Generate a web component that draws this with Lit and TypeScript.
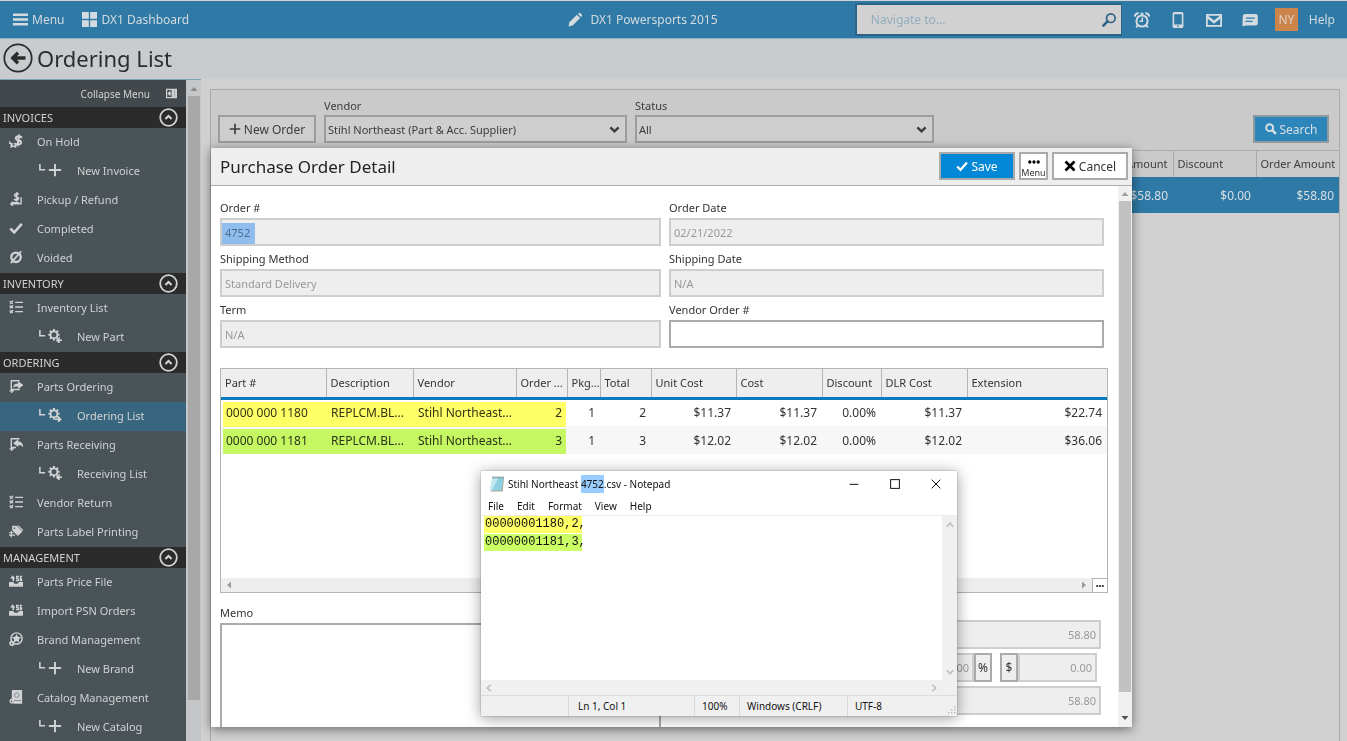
import { LitElement, html, css, svg, nothing } from "lit";
import { customElement, property } from "lit/decorators.js";
import { classMap } from "lit/directives/class-map.js";

const reset = css`
  *,
  *::before,
  *::after {
    box-sizing: border-box;
  }
  button,
  input,
  select,
  textarea {
    font: inherit;
    color: inherit;
    margin: 0;
    border-radius: 0;
  }
  a {
    color: inherit;
    text-decoration: none;
  }
`;

/* ---------- icons, all on a 16 x 16 grid ---------- */
const icons = {
  bars: svg`<path d="M0 3h16M0 8h16M0 13h16" stroke="currentColor" stroke-width="2.6"/>`,
  tiles: svg`<path d="M0 0h7.3v7.3H0zM8.7 0H16v7.3H8.7zM0 8.7h7.3V16H0zM8.7 8.7H16V16H8.7z" fill="currentColor"/>`,
  pencil: svg`<path d="M1.500 14.500l.8-4.200L10 2.800l3.200 3.200L5.600 13.600zM11 1.900l.7-.7q.9-.7 1.800 0l1.300 1.300q.7.9 0 1.800l-.7.7z" fill="currentColor"/>`,
  find: svg`<circle cx="9.800" cy="6.200" r="4.300" fill="none" stroke="currentColor" stroke-width="1.700"/><path d="M6.500 9.400 2.400 13.600" stroke="currentColor" stroke-width="2.600" stroke-linecap="round"/>`,
  alarm: svg`<circle cx="8" cy="9" r="5.6" fill="none" stroke="currentColor" stroke-width="2"/><path d="M8.3 5.5V9.3H5.6" fill="none" stroke="currentColor" stroke-width="1.5"/><path d="M.6 4.6Q1 1.5 4.6 1M15.4 4.6Q15 1.5 11.4 1M6.6 1.7h2.8M3.6 13.4 2.2 15.4M12.4 13.4l1.4 2" fill="none" stroke="currentColor" stroke-width="1.900"/>`,
  phone: svg`<path fill-rule="evenodd" d="M4.2 0h7.6q1.6 0 1.6 1.6v12.8q0 1.6-1.6 1.6H4.2q-1.6 0-1.6-1.6V1.6Q2.6 0 4.2 0zM4.2 2.2v10.2h7.6V2.2zM7.2 13.4v1.4h1.6v-1.4z" fill="currentColor"/>`,
  mail: svg`<rect x=".9" y="2.9" width="14.200" height="11" fill="none" stroke="currentColor" stroke-width="1.800"/><path d="M1 4.400 8 10l7-5.600" fill="none" stroke="currentColor" stroke-width="2.600"/>`,
  chat: svg`<path fill-rule="evenodd" d="M3 2h10.600q2.200 0 2.200 2v7.600q0 2-2.200 2H4l-3.600.6L.8 4q.2-2 2.200-2zM4 5.400v1.300h8.800V5.400zM3.400 8.800v1.300h7.200V8.800z" fill="currentColor"/>`,
  back: svg`<circle cx="8" cy="8" r="7.3" fill="none" stroke="currentColor" stroke-width=".95"/><path d="M12 8H5M8 5.200 5.200 8 8 10.800" fill="none" stroke="currentColor" stroke-width="1.800"/>`,
  up: svg`<circle cx="8" cy="8" r="7" fill="none" stroke="currentColor" stroke-width="1.500"/><path d="M5.400 9.2 8 6.800l2.600 2.400" fill="none" stroke="currentColor" stroke-width="1.800"/>`,
  collapse: svg`<path fill-rule="evenodd" d="M0 1h16v14H0zM1.800 2.800v10.400h6.400V2.800z" fill="currentColor"/><path d="M7.800 8H4M5.800 5.400 3.200 8l2.600 2.600z" stroke="currentColor" stroke-width="1.600" fill="currentColor"/><path d="M12.500 3v10" stroke="#8d9295" stroke-width="1"/>`,
  hold: svg`<path d="M15 4.200Q12.800 2.600 10.600 2.700 7.600 3 7.800 5 8 6.700 10.800 7.300q3.200.6 3 2.600-.4 2.200-3.600 2.100Q7.600 11.800 6 10.600M11.800.6 9.600 14" fill="none" stroke="currentColor" stroke-width="2.400"/><path d="M.6 8.400v2l4 1.400M1.600 14h6.800M2.600 12v3.600M7.400 12.400v3.200" stroke="currentColor" stroke-width="1.800" fill="none"/>`,
  refund: svg`<path d="M11.200 2.600Q9.800 1.800 8.400 2 6.400 2.300 6.600 3.900 6.900 5.300 8.800 5.700q2.300.5 2 2.100-.4 1.700-2.600 1.500-1.600-.2-2.700-1.100M9.200.2 8.300 11" fill="none" stroke="currentColor" stroke-width="1.900"/><path d="M13.800 6v7.600H2M4.600 11 2 13.600 4.600 16M3.600 12.200h8" fill="none" stroke="currentColor" stroke-width="1.600"/>`,
  check: svg`<path d="M1.500 8.600 6 13 14.600 3.200" fill="none" stroke="currentColor" stroke-width="3"/>`,
  empty: svg`<circle cx="8" cy="8.300" r="5.400" fill="none" stroke="currentColor" stroke-width="2.600"/><path d="M2 15 14 1.400" stroke="currentColor" stroke-width="2"/>`,
  list: svg`<path d="M7 2.800h9M7 8h9M7 13.200h9" stroke="currentColor" stroke-width="1.500"/><path d="M.6 1.400 4.600 4M4.600.8 1.400 4.600M.6 6.600l4 2.400M4.600 6 1.400 9.800M.6 12l4 2.400M4.600 11.400 1.400 15.200" stroke="currentColor" stroke-width="1.600"/>`,
  gearIn: svg`<circle cx="6.800" cy="6.600" r="3.900" fill="none" stroke="currentColor" stroke-width="2"/><path d="M6.800 0v2.200M6.800 11v2M.4 6.600h2M11 6.600h2.200M2.200 2l1.600 1.600M9.800 9.600l1 1M2.200 11.200l1.600-1.600M11.400 2 9.800 3.600" stroke="currentColor" stroke-width="2.400"/><path d="M16 12.800h-4.600M12.600 10.400 10 12.800l2.600 2.800z" stroke="currentColor" stroke-width="1.600" fill="currentColor"/>`,
  gearOut: svg`<circle cx="6.800" cy="6.600" r="3.900" fill="none" stroke="currentColor" stroke-width="2"/><path d="M6.800 0v2.200M6.800 11v2M.4 6.600h2M11 6.600h2.200M2.200 2l1.600 1.600M9.800 9.600l1 1M2.200 11.200l1.600-1.600M11.400 2 9.800 3.600" stroke="currentColor" stroke-width="2.400"/><path d="M7.600 12.800h4.600M12 10.400l2.600 2.400-2.600 2.800z" stroke="currentColor" stroke-width="1.600" fill="currentColor"/>`,
  send: svg`<path d="M12 2H2.600v10h9.800M.6 13.600h5" fill="none" stroke="currentColor" stroke-width="1.600"/><path d="M4.600 10Q5 5 10.400 5V2.600L16.400 7l-6 4.400V8.800Q6.600 8.200 4.600 10z" fill="currentColor"/><path d="M3 12v4" stroke="currentColor" stroke-width="1.600"/>`,
  receive: svg`<path d="M12 2H2.600v10h5.400M.6 13.600h5" fill="none" stroke="currentColor" stroke-width="1.600"/><path d="M16.400 13Q15.600 9 10.600 9v2.400L4.600 7l6-4.400V5.200Q16.400 5.600 16.400 13z" fill="currentColor"/><path d="M3 12v4" stroke="currentColor" stroke-width="1.600"/>`,
  tag: svg`<path fill-rule="evenodd" d="M3.600 2h5l6.800 6.600-5.200 5.200L3.600 7zM5.400 4v1.600h1.600V4z" fill="currentColor"/><path d="M10 1.800 16 7.600M0 10h5M0 12.600h7M2.600 8v7" stroke="currentColor" stroke-width="1.400"/>`,
  inbox: svg`<path d="M0 9h4.800l1.400 2.200h3.800L11.400 9H16v5.600H0z" fill="currentColor"/><path d="M4 8.400V5H1.200L4.200 1.400 7.200 5H5.800v3.400zM8 2h3.400v1.600H9.800v1.200h1.800v3.400H8V6.800h1.800V6H8zM12.400 2H15v1.600h-1.200v1.200H15v3.400h-2.600z" fill="currentColor"/>`,
  star: svg`<circle cx="8.600" cy="7.400" r="6.400" fill="none" stroke="currentColor" stroke-width="1.700"/><path d="m8.600 2.200 1.600 3.300 3.700.5-2.700 2.500.7 3.700-3.300-1.900-3.300 1.900.7-3.700L3.300 6l3.700-.5z" fill="currentColor"/><circle cx="3.200" cy="13" r="2" fill="none" stroke="currentColor" stroke-width="1.900"/>`,
  book: svg`<path d="M3.400 0H15v15.600H5.400L3 12.400z" fill="currentColor"/><circle cx="9" cy="5.800" r="2.600" fill="none" stroke="#7b8387" stroke-width="1"/><path d="M5 12h9" stroke="#7b8387"/><circle cx="3.200" cy="12.800" r="2" fill="none" stroke="currentColor" stroke-width="1.600"/>`,
  plus: svg`<path d="M8 1v14M1 8h14" stroke="currentColor" stroke-width="2.200"/>`,
  branch: svg`<path d="M2 0v13h12" fill="none" stroke="currentColor" stroke-width="3.600"/>`,
  zoom: svg`<circle cx="6.200" cy="6.200" r="4.600" fill="none" stroke="currentColor" stroke-width="2.600"/><path d="m9.800 9.800 4.800 4.800" stroke="currentColor" stroke-width="3.200"/>`,
  cross: svg`<path d="m2 2 12 12M14 2 2 14" stroke="currentColor" stroke-width="3.600"/>`,
  dots: svg`<circle cx="2.400" cy="8" r="2.200" fill="currentColor"/><circle cx="8" cy="8" r="2.200" fill="currentColor"/><circle cx="13.600" cy="8" r="2.200" fill="currentColor"/>`,
  chevron: svg`<path d="m2 5 6 5.600L14 5" fill="none" stroke="currentColor" stroke-width="3.600"/>`,
  triUp: svg`<path d="M1 12 8 4l7 8z" fill="currentColor"/>`,
  triDown: svg`<path d="M1 4l7 8 7-8z" fill="currentColor"/>`,
  triLeft: svg`<path d="M12 1 4 8l8 7z" fill="currentColor"/>`,
  triRight: svg`<path d="M4 1l8 7-8 7z" fill="currentColor"/>`,
  thinUp: svg`<path d="m1.500 11.500 6.500-7 6.500 7" fill="none" stroke="currentColor" stroke-width="3.200"/>`,
  thinDown: svg`<path d="m1.500 4.500 6.500 7 6.500-7" fill="none" stroke="currentColor" stroke-width="3.200"/>`,
  thinLeft: svg`<path d="m11.500 1.500-7 6.500 7 6.500" fill="none" stroke="currentColor" stroke-width="3.200"/>`,
  thinRight: svg`<path d="m4.500 1.500 7 6.500-7 6.500" fill="none" stroke="currentColor" stroke-width="3.200"/>`,
  minimize: svg`<path d="M1 8.500h14" stroke="currentColor" stroke-width="1.600"/>`,
  maximize: svg`<rect x="1" y="1" width="14" height="14" fill="none" stroke="currentColor" stroke-width="1.600"/>`,
  close: svg`<path d="m1 1 14 14M15 1 1 15" stroke="currentColor" stroke-width="1.600"/>`,
  grip: svg`<path d="M12 0h3v3h-3zM12 6h3v3h-3zM12 12h3v3h-3zM6 6h3v3H6zM6 12h3v3H6zM0 12h3v3H0z" fill="currentColor"/>`,
  notepad: svg`<path d="M4 2h11l-1.400 13.500H2z" fill="#a9a58e"/><path d="M3.400 1.500h11.200L12.600 14.500H1z" fill="#8fd0e0"/><path d="M3.400 1.500h6L3 14.500H1z" fill="#c2e9f1"/><path d="M3.400 1.500h11.200" stroke="#6f858c" stroke-width="1.800" stroke-dasharray="1.200 .8"/>`,
};
type IconName = keyof typeof icons;

@customElement("ui-icon")
export class UiIcon extends LitElement {
  @property() name: IconName = "plus";
  static styles = css`
    :host {
      display: inline-block;
      flex: none;
      width: 16px;
      height: 16px;
    }
    svg {
      display: block;
      width: 100%;
      height: 100%;
    }
  `;
  render() {
    return html`<svg viewBox="0 0 16 16" aria-hidden="true">${icons[this.name]}</svg>`;
  }
}

/* ---------- top bar ---------- */
@customElement("top-bar")
export class TopBar extends LitElement {
  static styles = [
    reset,
    css`
      :host {
        display: block;
        color: #d4dbe0;
        font-size: 12px;
      }
      .bar {
        display: grid;
        grid-template-columns: 9fr auto 10fr;
        align-items: center;
        height: 38px;
        border-top: 1px solid #d3d3d3;
        background: #2e79a5;
      }
      .group {
        display: flex;
        align-items: center;
      }
      .left {
        padding-left: 13px;
        gap: 18px;
      }
      .link {
        display: flex;
        align-items: center;
        gap: 4px;
      }
      .link ui-icon {
        width: 15px;
        height: 15px;
      }
      .center {
        gap: 8px;
      }
      .right {
        justify-self: end;
        padding-right: 12px;
        gap: 20px;
      }
      .search {
        display: flex;
        align-items: center;
        width: 267px;
        height: 33px;
        margin-right: -8px;
        padding: 0 4px 0 14px;
        border: 2px solid #2b6487;
        border-right-width: 1px;
        background: #d1d1d1;
      }
      .search input {
        flex: 1;
        min-width: 0;
        padding: 0;
        border: 0;
        outline: 0;
        background: none;
      }
      .search input::placeholder {
        color: #93adbe;
        opacity: 1;
      }
      .search ui-icon {
        color: #2b6487;
      }
      .icon {
        display: flex;
        padding: 0;
        border: 0;
        background: none;
      }
      .badge {
        width: 23px;
        height: 23px;
        margin: 0 -9px 0 -3px;
        padding: 0;
        border: 0;
        background: #cd844b;
        color: #dcd3cb;
      }
      .title {
        display: flex;
        align-items: center;
        gap: 4px;
        height: 42px;
        margin-bottom: -1px;
        padding: 0 0 2px 3px;
        border-top: 1px solid #8fb0c2;
        border-bottom: 1px solid #7ea4b8;
        background: #c8cccf;
        color: #2c2c2c;
      }
      .title h1 {
        margin: 0;
        font-size: 22px;
        font-weight: 400;
      }
      .back {
        display: flex;
        padding: 0;
        border: 0;
        background: none;
      }
      .back ui-icon {
        width: 30px;
        height: 30px;
      }
    `,
  ];
  render() {
    return html`
      <nav class="bar">
        <div class="group left">
          <a class="link" href="#menu"><ui-icon name="bars"></ui-icon>Menu</a>
          <a class="link" href="#dashboard"><ui-icon name="tiles"></ui-icon>DX1 Dashboard</a>
        </div>
        <div class="group center">
          <ui-icon name="pencil"></ui-icon><span>DX1 Powersports 2015</span>
        </div>
        <div class="group right">
          <div class="search">
            <input type="text" aria-label="Navigate to" placeholder="Navigate to..." />
            <ui-icon name="find"></ui-icon>
          </div>
          ${(["alarm", "phone", "mail", "chat"] as IconName[]).map(
            (n) => html`<button class="icon" aria-label=${n}><ui-icon name=${n}></ui-icon></button>`
          )}
          <button class="badge">NY</button>
          <a href="#help">Help</a>
        </div>
      </nav>
      <header class="title">
        <button class="back" aria-label="Back"><ui-icon name="back"></ui-icon></button>
        <h1>Ordering List</h1>
      </header>
    `;
  }
}

/* ---------- side menu ---------- */
interface Item {
  label: string;
  icon: IconName;
  sub?: boolean;
  active?: boolean;
}
const sections: { title: string; items: Item[] }[] = [
  {
    title: "INVOICES",
    items: [
      { label: "On Hold", icon: "hold" },
      { label: "New Invoice", icon: "plus", sub: true },
      { label: "Pickup / Refund", icon: "refund" },
      { label: "Completed", icon: "check" },
      { label: "Voided", icon: "empty" },
    ],
  },
  {
    title: "INVENTORY",
    items: [
      { label: "Inventory List", icon: "list" },
      { label: "New Part", icon: "gearIn", sub: true },
    ],
  },
  {
    title: "ORDERING",
    items: [
      { label: "Parts Ordering", icon: "send" },
      { label: "Ordering List", icon: "gearOut", sub: true, active: true },
      { label: "Parts Receiving", icon: "receive" },
      { label: "Receiving List", icon: "gearIn", sub: true },
      { label: "Vendor Return", icon: "list" },
      { label: "Parts Label Printing", icon: "tag" },
    ],
  },
  {
    title: "MANAGEMENT",
    items: [
      { label: "Parts Price File", icon: "inbox" },
      { label: "Import PSN Orders", icon: "inbox" },
      { label: "Brand Management", icon: "star" },
      { label: "New Brand", icon: "plus", sub: true },
      { label: "Catalog Management", icon: "book" },
      { label: "New Catalog", icon: "plus", sub: true },
    ],
  },
];

@customElement("side-menu")
export class SideMenu extends LitElement {
  static styles = [
    reset,
    css`
      :host {
        display: flex;
        overflow: hidden;
        padding-top: 1px;
        font-size: 11px;
        color: #d0d2d3;
      }
      .menu {
        width: 186px;
        background: #4a5357;
        overflow: hidden;
      }
      .collapse {
        display: flex;
        justify-content: flex-end;
        align-items: center;
        gap: 16px;
        width: 100%;
        height: 27px;
        padding: 0 9px 0 0;
        border: 0;
        background: #42484b;
        font-size: 10px;
      }
      .collapse ui-icon {
        width: 11px;
        height: 11px;
      }
      .section {
        display: flex;
        align-items: center;
        justify-content: space-between;
        width: 100%;
        height: 21px;
        padding: 0 8px 0 3px;
        border: 0;
        background: #2b2b2b;
      }
      .section ui-icon {
        width: 19px;
        height: 19px;
      }
      ul {
        margin: 0;
        padding: 0;
        list-style: none;
      }
      .item {
        display: grid;
        grid-template-columns: 28px 1fr;
        align-items: center;
        height: 29px;
        padding: 0 0 3px 9px;
      }
      .item > ui-icon {
        width: 14px;
        height: 14px;
      }
      .item.sub {
        grid-template-columns: 9px 29px 1fr;
        padding-left: 39px;
      }
      .item.sub > ui-icon:first-child {
        width: 7px;
        height: 7px;
        margin-bottom: 5px;
      }
      .item.active {
        background: #38667f;
      }
      .scroll {
        width: 15px;
        padding: 5px 1px 0 2px;
        background: #c5c6c7;
        color: #8a8a8a;
      }
      .scroll ui-icon {
        display: block;
        width: 8px;
        height: 8px;
        margin: 0 2px 3px;
      }
      .thumb {
        height: 92%;
        background: #a8a8a8;
      }
    `,
  ];
  render() {
    return html`
      <nav class="menu">
        <button class="collapse">Collapse Menu<ui-icon name="collapse"></ui-icon></button>
        ${sections.map(
          (s) => html`
            <button class="section">${s.title}<ui-icon name="up"></ui-icon></button>
            <ul>
              ${s.items.map(
                (i) => html`<li>
                  <a class=${classMap({ item: true, sub: !!i.sub, active: !!i.active })} href="#item">
                    ${i.sub ? html`<ui-icon name="branch"></ui-icon>` : nothing}
                    <ui-icon name=${i.icon}></ui-icon><span>${i.label}</span>
                  </a>
                </li>`
              )}
            </ul>
          `
        )}
      </nav>
      <div class="scroll"><ui-icon name="triUp"></ui-icon><div class="thumb"></div></div>
    `;
  }
}

/* ---------- order list behind the dialog ---------- */
@customElement("order-list")
export class OrderList extends LitElement {
  static styles = [
    reset,
    css`
      :host {
        display: block;
        padding: 10px 7px 0 9px;
        background: #d0d0d0;
        font-size: 11px;
        color: #3c3c3c;
      }
      .panel {
        height: 100%;
        border: 1px solid #aaaaaa;
        border-bottom: 0;
        background: #d0d0d0;
      }
      .filters {
        display: grid;
        grid-template-columns: 98px 303px 299px 1fr;
        gap: 8px;
        align-items: end;
        padding: 8px 10px 7px 7px;
        background: #cacaca;
      }
      .filters label {
        display: block;
        line-height: 15px;
        margin-bottom: 2px;
      }
      .btn {
        display: flex;
        align-items: center;
        justify-content: center;
        gap: 3px;
        height: 28px;
        padding: 0;
        border: 2px solid #9c9c9c;
        background: #cecece;
        font-size: 12px;
      }
      .btn ui-icon {
        width: 12px;
        height: 12px;
      }
      .primary {
        justify-self: end;
        width: 76px;
        background: #2c86ba;
        border-color: #8f9aa0;
        color: #d8dfe3;
        font-size: 12px;
      }
      .select {
        position: relative;
      }
      select {
        display: block;
        width: 100%;
        height: 28px;
        padding: 0 2px;
        appearance: none;
        border: 2px solid #9c9c9c;
        background: #cecece;
      }
      .select ui-icon {
        position: absolute;
        right: 7px;
        top: 9px;
        width: 11px;
        height: 11px;
        pointer-events: none;
      }
      table {
        width: 100%;
        border-collapse: collapse;
        table-layout: fixed;
        border-top: 1px solid #aaaaaa;
      }
      th {
        height: 26px;
        padding: 0 4px;
        border-left: 1px solid #aaaaaa;
        background: #cacaca;
        font-weight: 400;
        text-align: left;
        white-space: nowrap;
      }
      th.end {
        border-left: 0;
        text-align: right;
        padding-right: 5px;
      }
      th:first-child {
        border-left: 0;
      }
      td {
        height: 36px;
        padding: 2px 5px 0 4px;
        background: #2e79a5;
        color: #d8dfe3;
        font-size: 12px;
        text-align: right;
      }
      .money {
        width: 83px;
      }
    `,
  ];
  render() {
    return html`
      <section class="panel">
        <div class="filters">
          <button class="btn"><ui-icon name="plus"></ui-icon>New Order</button>
          <div>
            <label for="vendor">Vendor</label>
            <div class="select">
              <select id="vendor"><option>Stihl Northeast (Part &amp; Acc. Supplier)</option></select>
              <ui-icon name="chevron"></ui-icon>
            </div>
          </div>
          <div>
            <label for="status">Status</label>
            <div class="select">
              <select id="status"><option>All</option></select>
              <ui-icon name="chevron"></ui-icon>
            </div>
          </div>
          <button class="btn primary"><ui-icon name="zoom"></ui-icon>Search</button>
        </div>
        <table>
          <colgroup><col /><col class="money" /><col class="money" /><col class="money" /></colgroup>
          <thead>
            <tr><th></th><th class="end">Amount</th><th>Discount</th><th>Order Amount</th></tr>
          </thead>
          <tbody>
            <tr><td></td><td>$58.80</td><td>$0.00</td><td>$58.80</td></tr>
          </tbody>
        </table>
      </section>
    `;
  }
}

/* ---------- purchase order dialog ---------- */
const fields = [
  { id: "order", label: "Order #", value: "4752", picked: true },
  { id: "date", label: "Order Date", value: "02/21/2022" },
  { id: "method", label: "Shipping Method", value: "Standard Delivery" },
  { id: "shipdate", label: "Shipping Date", value: "N/A" },
  { id: "term", label: "Term", value: "N/A" },
  { id: "vendororder", label: "Vendor Order #", value: "", editable: true },
];
const columns = [
  { label: "Part #", w: 105 },
  { label: "Description", w: 87 },
  { label: "Vendor", w: 103 },
  { label: "Order ...", w: 51, num: true },
  { label: "Pkg...", w: 33, num: true },
  { label: "Total", w: 51, num: true },
  { label: "Unit Cost", w: 85, num: true },
  { label: "Cost", w: 86, num: true },
  { label: "Discount", w: 59, num: true },
  { label: "DLR Cost", w: 86, num: true },
  { label: "Extension", w: 140, num: true },
];
const rows = [
  ["0000 000 1180", "REPLCM.BL...", "Stihl Northeast...", "2", "1", "2", "$11.37", "$11.37", "0.00%", "$11.37", "$22.74"],
  ["0000 000 1181", "REPLCM.BL...", "Stihl Northeast...", "3", "1", "3", "$12.02", "$12.02", "0.00%", "$12.02", "$36.06"],
];

@customElement("purchase-order")
export class PurchaseOrder extends LitElement {
  static styles = [
    reset,
    css`
      :host {
        display: flex;
        flex-direction: column;
        background: #fff;
        font-size: 11px;
        color: #333;
        box-shadow: 0 2px 10px rgba(0, 0, 0, 0.5);
        overflow: hidden;
      }
      header {
        display: flex;
        align-items: center;
        gap: 4px;
        height: 38px;
        padding: 0 4px 1px 9px;
        background: #eeeeee;
        border-bottom: 1px solid #adadad;
      }
      h2 {
        flex: 1;
        margin: 0;
        font-size: 17px;
        font-weight: 400;
        color: #222;
      }
      .btn {
        display: flex;
        align-items: center;
        justify-content: center;
        gap: 3px;
        width: 76px;
        height: 28px;
        padding: 0;
        border: 2px solid #aaaaaa;
        background: #fff;
        font-size: 12px;
      }
      .btn ui-icon {
        width: 12px;
        height: 12px;
        color: #000;
      }
      .save,
      .btn.save ui-icon {
        background: #0388d8;
        color: #fff;
      }
      .menu {
        flex-direction: column;
        gap: 0;
        width: 29px;
        font-size: 9px;
        line-height: 9px;
      }
      .btn.menu ui-icon {
        width: 16px;
        height: 12px;
      }
      .body {
        display: flex;
        flex: 1;
        min-height: 0;
      }
      .content {
        flex: 1;
        min-width: 0;
        padding: 15px 10px 0 9px;
        overflow: hidden;
      }
      .fields {
        display: grid;
        grid-template-columns: 441fr 435fr;
        gap: 6px 8px;
        margin-right: 4px;
      }
      .field label,
      .memo label {
        display: block;
        line-height: 14px;
        margin-bottom: 3px;
      }
      .box {
        position: relative;
      }
      input {
        display: block;
        width: 100%;
        height: 28px;
        padding: 0 3px;
        border: 2px solid #cecece;
        background: #eeeeee;
        color: #999;
      }
      input.editable {
        border-color: #aaaaaa;
        background: #fff;
      }
      .pick {
        position: absolute;
        left: 2px;
        top: 5px;
        width: 33px;
        height: 21px;
        background: #99ccff;
        mix-blend-mode: multiply;
      }
      input.picked {
        color: #7d8891;
      }
      .grid {
        position: relative;
        display: flex;
        flex-direction: column;
        height: 225px;
        margin-top: 20px;
        border: 1px solid #b4b4b4;
        overflow: hidden;
      }
      table {
        width: 100%;
        border-collapse: collapse;
        table-layout: fixed;
      }
      th {
        height: 29px;
        padding: 0 0 0 4px;
        border-right: 1px solid #b4b4b4;
        border-bottom: 3px solid #0a7ac0;
        background: #eeeeee;
        font-weight: 400;
        text-align: left;
        white-space: nowrap;
      }
      th:last-child {
        border-right: 0;
      }
      td {
        height: 28px;
        padding: 0 5px;
        font-size: 12px;
        white-space: nowrap;
      }
      td.num {
        text-align: right;
      }
      tr:nth-child(2) td {
        background: #f7f7f7;
      }
      .mark {
        position: absolute;
        left: 2px;
        width: 343px;
        height: 25px;
        top: 33px;
        background: #ffff66;
        mix-blend-mode: multiply;
      }
      .mark.green {
        top: 60px;
        background: #ccff66;
      }
      .hscroll {
        display: flex;
        align-items: center;
        justify-content: space-between;
        height: 14px;
        margin-top: auto;
        padding-left: 4px;
        background: #eeeeee;
        color: #9a9a9a;
      }
      .hscroll ui-icon {
        width: 8px;
        height: 8px;
      }
      .more {
        display: flex;
        align-items: center;
        justify-content: center;
        width: 15px;
        height: 14px;
        margin-left: 4px;
        padding: 0;
        border: 0;
        border-left: 1px solid #b4b4b4;
        border-top: 1px solid #b4b4b4;
        background: #fff;
        color: #222;
      }
      .end {
        display: flex;
        align-items: center;
        margin-left: auto;
      }
      .bottom {
        display: grid;
        grid-template-columns: 441fr 432fr;
        gap: 8px;
        margin: 13px 7px 0 0;
      }
      textarea {
        display: block;
        width: 100%;
        height: 110px;
        border: 2px solid #aaaaaa;
        resize: none;
      }
      .totals {
        display: grid;
        align-content: start;
        gap: 4px;
        padding-top: 14px;
      }
      .totals input {
        height: 29px;
        text-align: right;
      }
      .split {
        display: flex;
        gap: 8px;
        margin-right: 4px;
      }
      .split > div {
        display: flex;
      }
      .split > div:first-child {
        flex: 1;
      }
      .split > div:last-child {
        width: 97px;
      }
      .unit {
        flex: none;
        width: 18px;
        padding: 0;
        border: 2px solid #aaaaaa;
        background: #eeeeee;
        font-size: 12px;
      }
      .vscroll {
        display: flex;
        flex-direction: column;
        width: 14px;
        padding: 4px 1px 5px;
        background: #f0f0f0;
        color: #a0a0a0;
      }
      .vscroll ui-icon {
        width: 8px;
        height: 8px;
        margin: 0 2px 3px;
      }
      .thumb {
        height: 94%;
        margin-bottom: 22px;
        background: #c1c1c1;
      }
      .vscroll ui-icon:last-child {
        margin-bottom: 0;
        color: #505050;
      }
    `,
  ];
  render() {
    return html`
      <header>
        <h2>Purchase Order Detail</h2>
        <button class="btn save"><ui-icon name="check"></ui-icon>Save</button>
        <button class="btn menu"><ui-icon name="dots"></ui-icon>Menu</button>
        <button class="btn"><ui-icon name="cross"></ui-icon>Cancel</button>
      </header>
      <div class="body">
        <div class="content">
          <div class="fields">
            ${fields.map(
              (f) => html`<div class="field">
                <label for=${f.id}>${f.label}</label>
                <div class="box">
                  <input
                    id=${f.id}
                    type="text"
                    class=${classMap({ editable: !!f.editable, picked: !!f.picked })}
                    ?readonly=${!f.editable}
                    .value=${f.value}
                  />
                  ${f.picked ? html`<span class="pick"></span>` : nothing}
                </div>
              </div>`
            )}
          </div>
          <div class="grid">
            <table>
              <colgroup>
                ${columns.map((c) => html`<col width=${c.w} />`)}
              </colgroup>
              <thead>
                <tr>${columns.map((c) => html`<th>${c.label}</th>`)}</tr>
              </thead>
              <tbody>
                ${rows.map(
                  (r) => html`<tr>
                    ${r.map((v, i) => html`<td class=${classMap({ num: !!columns[i].num })}>${v}</td>`)}
                  </tr>`
                )}
              </tbody>
            </table>
            <span class="mark"></span><span class="mark green"></span>
            <div class="hscroll">
              <ui-icon name="triLeft"></ui-icon>
              <div class="end">
                <ui-icon name="triRight"></ui-icon>
                <button class="more" aria-label="More"><ui-icon name="dots"></ui-icon></button>
              </div>
            </div>
          </div>
          <div class="bottom">
            <div class="memo">
              <label for="memo">Memo</label>
              <textarea id="memo"></textarea>
            </div>
            <div class="totals">
              <input type="text" readonly aria-label="Subtotal" .value=${"58.80"} />
              <div class="split">
                <div>
                  <input type="text" readonly aria-label="Discount percent" .value=${"0.00"} />
                  <button class="unit">%</button>
                </div>
                <div>
                  <button class="unit">$</button>
                  <input type="text" readonly aria-label="Discount amount" .value=${"0.00"} />
                </div>
              </div>
              <input type="text" readonly aria-label="Total" .value=${"58.80"} />
            </div>
          </div>
        </div>
        <div class="vscroll">
          <ui-icon name="triUp"></ui-icon>
          <div class="thumb"></div>
          <ui-icon name="triDown"></ui-icon>
        </div>
      </div>
    `;
  }
}

/* ---------- notepad window ---------- */
@customElement("notepad-window")
export class NotepadWindow extends LitElement {
  static styles = [
    reset,
    css`
      :host {
        display: flex;
        flex-direction: column;
        background: #fff;
        font-size: 10px;
        color: #111;
        box-shadow: 0 2px 14px rgba(0, 0, 0, 0.4), 0 0 1px rgba(0, 0, 0, 0.5);
      }
      .title {
        display: flex;
        align-items: center;
        height: 26px;
        padding: 0 16px 0 8px;
      }
      .title > ui-icon {
        margin-right: 3px;
      }
      .name {
        flex: 1;
        white-space: pre;
      }
      .name mark {
        padding: 2px 0;
        background: #99ccff;
        color: inherit;
      }
      .win {
        display: flex;
        margin-left: 31px;
        padding: 0;
        border: 0;
        background: none;
      }
      .win ui-icon {
        width: 10px;
        height: 10px;
      }
      .menu {
        display: flex;
        gap: 13px;
        height: 19px;
        padding-left: 7px;
        line-height: 19px;
        border-bottom: 1px solid #eeeeee;
      }
      .menu button {
        padding: 0;
        border: 0;
        background: none;
      }
      .area {
        display: flex;
        flex: 1;
      }
      .text {
        display: flex;
        flex-direction: column;
        align-items: flex-start;
        gap: 1px;
        flex: 1;
        padding: 0 3px;
        font: 12px/17px "Liberation Mono", monospace;
      }
      .text mark {
        width: 98px;
        padding-left: 1px;
        background: #ffff66;
        color: inherit;
        white-space: nowrap;
      }
      .text .green {
        background: #ccff66;
      }
      .v,
      .h {
        display: flex;
        justify-content: space-between;
        align-items: center;
        background: #f0f0f0;
        color: #bdbdbd;
      }
      .v {
        flex-direction: column;
        width: 15px;
        padding: 5px 0 4px;
      }
      .h {
        height: 15px;
        padding: 0 19px 0 4px;
      }
      .v ui-icon,
      .h ui-icon {
        width: 8px;
        height: 8px;
      }
      .status {
        position: relative;
        display: grid;
        grid-template-columns: 87px 126px 45px 108px 1fr;
        height: 21px;
        line-height: 20px;
        border-top: 1px solid #dcdcdc;
        background: #f0f0f0;
      }
      .status span + span {
        padding-left: 7px;
        border-left: 1px solid #d9d9d9;
      }
      .status span:nth-child(2) {
        padding-left: 9px;
      }
      .grip {
        position: absolute;
        right: 1px;
        bottom: 2px;
        width: 8px;
        height: 8px;
        color: #bdbdbd;
      }
    `,
  ];
  render() {
    return html`
      <div class="title">
        <ui-icon name="notepad"></ui-icon>
        <span class="name">Stihl Northeast <mark>4752</mark>.csv - Notepad</span>
        ${(["minimize", "maximize", "close"] as IconName[]).map(
          (n) => html`<button class="win" aria-label=${n}><ui-icon name=${n}></ui-icon></button>`
        )}
      </div>
      <div class="menu">
        ${["File", "Edit", "Format", "View", "Help"].map((m) => html`<button>${m}</button>`)}
      </div>
      <div class="area">
        <div class="text">
          <mark>00000001180,2,</mark>
          <mark class="green">00000001181,3,</mark>
        </div>
        <div class="v"><ui-icon name="thinUp"></ui-icon><ui-icon name="thinDown"></ui-icon></div>
      </div>
      <div class="h"><ui-icon name="thinLeft"></ui-icon><ui-icon name="thinRight"></ui-icon></div>
      <div class="status">
        <span></span><span>Ln 1, Col 1</span><span>100%</span><span>Windows (CRLF)</span><span>UTF-8</span>
        <ui-icon class="grip" name="grip"></ui-icon>
      </div>
    `;
  }
}

@customElement("app-root")
export class AppRoot extends LitElement {
  static styles = [
    reset,
    css`
      :host {
        position: relative;
        display: grid;
        grid-template-rows: 79px minmax(0, 1fr);
        height: 100vh;
        overflow: hidden;
        background: #d0d0d0;
        font-family: "Noto Sans", "Open Sans", sans-serif;
      }
      .main {
        display: grid;
        grid-template-columns: auto minmax(0, 1fr);
      }
      .dialog {
        position: absolute;
        inset: 148px 215px 14px 211px;
      }
      .notepad {
        position: absolute;
        left: 481px;
        top: 471px;
        width: 476px;
        height: 245px;
      }
    `,
  ];
  render() {
    return html`
      <top-bar></top-bar>
      <div class="main">
        <side-menu></side-menu>
        <order-list></order-list>
      </div>
      <purchase-order class="dialog" role="dialog"></purchase-order>
      <notepad-window class="notepad"></notepad-window>
    `;
  }
}
